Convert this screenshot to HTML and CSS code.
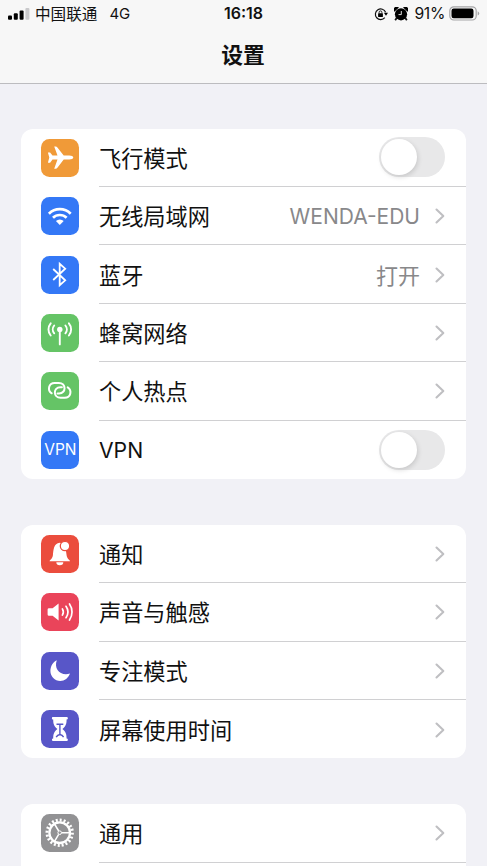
FILE: index.html
```html
<!DOCTYPE html>
<html lang="zh-CN">
<head>
<meta charset="utf-8">
<title>设置</title>
<link rel="stylesheet" href="styles.css">
</head>
<body>
<header class="header">
  <div class="status">
    <div class="status-left">
      <svg class="signal" width="22" height="12" viewBox="0 0 22 12"><rect x="0" y="7.5" width="4" height="4.2" rx="1"/><rect x="5.8" y="5.2" width="4" height="6.5" rx="1"/><rect x="11.6" y="2.6" width="4" height="9.1" rx="1"/><rect x="17.4" y="0" width="4" height="11.7" rx="1" fill="#c9c9cb"/></svg>
      <span class="carrier">中国联通</span><span class="network">4G</span>
    </div>
    <div class="clock">16:18</div>
    <div class="status-right">
      <svg width="14" height="14" viewBox="0 0 14 14"><path d="M10.8 10.6A5.3 5.3 0 1 1 11.6 5.3" fill="none" stroke="#111" stroke-width="1.2"/><path d="M9.9 5.8h4.1l-2 3z"/><rect x="4.100" y="6.2" width="4.800" height="3.800" rx=".6"/><path d="M5.100 6.500V5.300a1.400 1.400 0 0 1 2.800 0v1.200" fill="none" stroke="#111" stroke-width=".9"/></svg>
      <svg class="alarm" width="14" height="14" viewBox="0 0 14 14"><circle cx="7" cy="7.300" r="6.100"/><path d="M.4 4.800A2.500 2.500 0 0 1 4.900.6zM13.600 4.800A2.500 2.500 0 0 0 9.100.6z"/><path d="M2.800 10.800L1.200 13.200M11.200 10.800l1.600 2.400" stroke="#111" stroke-width="1.800"/><path d="M7.300 4v3.600H4.500" fill="none" stroke="#f7f7f7" stroke-width=".9"/></svg>
      <span class="percent">91%</span>
      <svg class="battery" width="31" height="15" viewBox="0 0 31 15"><rect x=".8" y=".8" width="26.400" height="13.200" rx="4" fill="none" stroke="#a5a5a7" stroke-width="1.200"/><rect x="2.500" y="2.500" width="22" height="9.800" rx="2.200"/><path d="M28.700 5.200q1.500.8 1.500 2.200t-1.500 2.200z" fill="#a5a5a7"/></svg>
    </div>
  </div>
  <h1 class="title">设置</h1>
</header>
<main class="groups">
  <section class="group">
    <div class="row">
      <svg class="icon orange" viewBox="0 0 38 38"><path d="M32.300 18.600c0 1.200-1.800 2-4 2h-5.600l-6.300 8.200c-.5.6-1 .9-1.800.9h-1.400l3.300-9.100h-5l-2.400 3.200H6.900l1.400-5.200-1.400-5.200h2.200l2.400 3.200h5l-3.300-9.100h1.400c.8 0 1.300.3 1.800.9l6.300 8.200h5.600c2.200 0 4 .8 4 2z" fill="#fff"/></svg>
      <div class="content"><span class="label">飞行模式</span><span class="switch"></span></div>
    </div>
    <div class="row">
      <svg class="icon blue" viewBox="0 0 38 38"><g fill="none" stroke="#fff" stroke-width="2.700"><path d="M7.900 16.700a15.500 15.500 0 0 1 21.800 0"/><path d="M12 20.800a9.600 9.600 0 0 1 13.600 0"/></g><path d="M14.900 24a5.500 5.500 0 0 1 7.800 0l-3.900 3.900z" fill="#fff"/></svg>
      <div class="content"><span class="label">无线局域网</span><span class="value latin-value">WENDA-EDU</span><svg class="chevron" viewBox="0 0 10 16"><path d="M1.500 1.500L8.300 8l-6.800 6.500"/></svg></div>
    </div>
    <div class="row">
      <svg class="icon blue" viewBox="0 0 38 38"><path d="M12.200 13l12 11.300-5.500 4.900V7.800l5.500 4.900L12.200 24" fill="none" stroke="#fff" stroke-width="1.800"/></svg>
      <div class="content"><span class="label">蓝牙</span><span class="value">打开</span><svg class="chevron" viewBox="0 0 10 16"><path d="M1.500 1.500L8.300 8l-6.800 6.500"/></svg></div>
    </div>
    <div class="row">
      <svg class="icon green" viewBox="0 0 38 38"><circle cx="18.800" cy="15.400" r="2.700" fill="#fff"/><g fill="none" stroke="#fff" stroke-width="1.900" stroke-linecap="round"><path d="M18.800 16v14.400"/><path d="M13.200 11.500a6 6 0 0 0 0 7.800M24.400 11.500a6 6 0 0 1 0 7.800M9.700 9.300a9.500 9.500 0 0 0 0 12.200M27.900 9.300a9.500 9.500 0 0 1 0 12.200"/></g></svg>
      <div class="content"><span class="label">蜂窝网络</span><svg class="chevron" viewBox="0 0 10 16"><path d="M1.500 1.500L8.300 8l-6.800 6.500"/></svg></div>
    </div>
    <div class="row">
      <svg class="icon green" viewBox="0 0 38 38"><g fill="none" stroke="#fff" stroke-width="2" stroke-linecap="round"><path d="M10.700 21.300c-4.600-3-3.200-10.400 3-10.400h4.100c7.600 0 7.600 10.500.3 10.500h-1.600"/><path d="M26.700 15.400c4.600 3 3.200 10.400-3 10.400h-4.100c-7.600 0-7.600-10.500-.3-10.500h1.600"/></g></svg>
      <div class="content"><span class="label">个人热点</span><svg class="chevron" viewBox="0 0 10 16"><path d="M1.500 1.500L8.300 8l-6.800 6.500"/></svg></div>
    </div>
    <div class="row">
      <div class="icon blue vpn">VPN</div>
      <div class="content"><span class="label latin">VPN</span><span class="switch"></span></div>
    </div>
  </section>
  <section class="group">
    <div class="row">
      <svg class="icon red" viewBox="0 0 38 38"><path d="M8.600 26.200c0-1.200 2.900-2.400 3.300-6 .5-5 .7-12 6.900-12.500 5.500.5 6.200 7.500 6.800 12.500.4 3.600 3.400 4.800 3.400 6z" fill="#fff"/><path d="M15.300 27.300h7a3.500 3 0 0 1-7 0z" fill="#fff"/><circle cx="24" cy="11" r="4.700" fill="#fff" stroke="#eb4d3d" stroke-width="1.300"/></svg>
      <div class="content"><span class="label">通知</span><svg class="chevron" viewBox="0 0 10 16"><path d="M1.500 1.500L8.300 8l-6.800 6.500"/></svg></div>
    </div>
    <div class="row">
      <svg class="icon pink" viewBox="0 0 38 38"><path d="M8 15.200h3.600l6-4.700v17l-6-4.700H8q-1.400 0-1.400-1.400v-4.800q0-1.400 1.400-1.400z" fill="#fff"/><g fill="none" stroke="#fff" stroke-width="1.700" stroke-linecap="round"><path d="M21.400 15.900a6 6 0 0 1 0 6.200M25 13.300a10 10 0 0 1 0 11.400M28.500 11a14 14 0 0 1 0 16"/></g></svg>
      <div class="content"><span class="label">声音与触感</span><svg class="chevron" viewBox="0 0 10 16"><path d="M1.500 1.500L8.300 8l-6.800 6.500"/></svg></div>
    </div>
    <div class="row">
      <svg class="icon indigo" viewBox="0 0 38 38"><path d="M15.800 8.200c-3.200 8.500 3.500 16.300 13.200 13.400-1.600 4.500-5.400 7.400-9.700 7.400-5.500 0-9.900-4.400-9.900-9.900 0-4.800 2.500-9 6.400-10.900z" fill="#fff"/></svg>
      <div class="content"><span class="label">专注模式</span><svg class="chevron" viewBox="0 0 10 16"><path d="M1.500 1.500L8.300 8l-6.800 6.500"/></svg></div>
    </div>
    <div class="row">
      <svg class="icon indigo" viewBox="0 0 38 38"><path d="M12.200 7h13.400q1.300 0 1.300 1.200t-1.300 1.300c0 4.300-.8 6.700-4.200 9.500 3.400 2.800 4.200 5.200 4.200 9.500q1.300.1 1.300 1.300T25.600 31H12.200q-1.300 0-1.300-1.200t1.300-1.300c0-4.300.8-6.700 4.200-9.500-3.400-2.800-4.200-5.200-4.200-9.500-1 0-1.300-.5-1.300-1.300S11.200 7 12.200 7z" fill="#fff"/><path d="M15.500 14.300h6.800M18.900 14.300v11M15.200 27.200q1.200-2.200 3.700-2.700 2.500.5 3.700 2.700" fill="none" stroke="#5856c8" stroke-width="1.400"/></svg>
      <div class="content"><span class="label">屏幕使用时间</span><svg class="chevron" viewBox="0 0 10 16"><path d="M1.500 1.500L8.300 8l-6.800 6.500"/></svg></div>
    </div>
  </section>
  <section class="group cut">
    <div class="row">
      <svg class="icon gray" viewBox="0 0 38 38"><g fill="none" stroke="#fff"><circle cx="18.700" cy="18.700" r="12.700" stroke-width="3" pathLength="40" stroke-dasharray="1 1"/><circle cx="18.700" cy="18.700" r="10.300" stroke-width="2.300"/><circle cx="18.700" cy="18.700" r="1.800" stroke-width="1"/><path d="M20.700 18.700h8.500M17.700 17l-4.800-8M17.700 20.400l-4.800 8" stroke-width="1.500"/></g></svg>
      <div class="content"><span class="label">通用</span><svg class="chevron" viewBox="0 0 10 16"><path d="M1.500 1.500L8.300 8l-6.800 6.500"/></svg></div>
    </div>
  </section>
</main>
</body>
</html>
```
FILE: styles.css
```css
* {
  box-sizing: border-box;
}

body {
  display: flex;
  flex-direction: column;
  margin: 0;
  height: 866px;
  overflow: hidden;
  background: #f1f1f6;
  color: #111;
  font-family: Inter, "Noto Sans CJK SC", sans-serif;
}

.header {
  flex: none;
  height: 84px;
  background: #f7f7f7;
  border-bottom: 1px solid #bcbcbf;
}

.status {
  display: grid;
  grid-template-columns: 1fr auto 1fr;
  align-items: center;
  height: 27px;
  padding: 0 7px 0 8px;
  font-size: 15px;
  line-height: 27px;
}

.status-left,
.status-right {
  display: flex;
  align-items: center;
  height: 27px;
}

.status-right {
  justify-content: flex-end;
}

.signal {
  margin-right: 5px;
}

.carrier {
  padding-top: 1px;
  font-size: 15.6px;
}

.network {
  margin-left: 12px;
}

.clock {
  margin-right: 1px;
  font-size: 16px;
  font-weight: 600;
}

.alarm {
  margin: 0 6px;
}

.percent {
  font-size: 15.7px;
  letter-spacing: -0.3px;
}

.battery {
  margin-left: 4px;
}

.title {
  margin: 0;
  padding-right: 1px;
  font-size: 21.8px;
  font-weight: 700;
  line-height: 56px;
  text-align: center;
}

.groups {
  display: flex;
  flex: 1;
  flex-direction: column;
  gap: 45.8px;
  min-height: 0;
  padding: 44.7px 21px 0;
}

.group {
  flex: none;
  background: #fff;
  border-radius: 12px;
  overflow: hidden;
}

.cut {
  flex: 1;
  min-height: 0;
  border-radius: 12px 12px 0 0;
}

.row {
  display: flex;
  align-items: center;
  height: 58.4px;
  padding-left: 20.4px;
}

.icon {
  flex: none;
  width: 38px;
  height: 38px;
  margin-right: 19.6px;
  border-radius: 8.5px;
}

.orange { background: #f09a38; }
.blue { background: #3478f6; }
.green { background: #65c466; }
.red { background: #eb4d3d; }
.pink { background: #ea445a; }
.indigo { background: #5856c8; }
.gray { background: #929294; }

.vpn {
  color: #fff;
  font-size: 15.5px;
  line-height: 38px;
  text-align: center;
}

.content {
  display: flex;
  flex: 1;
  align-items: center;
  height: 100%;
  padding-right: 21px;
  border-bottom: 1px solid #d0d0d2;
}

.group:not(.cut) .row:last-child .content {
  border-bottom: 0;
}

.label {
  flex: 1;
  padding-top: 3px;
  font-size: 22.2px;
  line-height: 32px;
}

.latin {
  padding-top: 1px;
  font-size: 21.2px;
}

.value {
  padding-top: 3px;
  color: #88888a;
  font-size: 22px;
  line-height: 32px;
}

.latin-value {
  font-size: 21px;
}

.chevron {
  width: 10px;
  height: 16px;
  margin-top: 1px;
  margin-left: 15px;
  fill: none;
  stroke: #bfbfc2;
  stroke-width: 2.1;
  stroke-linecap: round;
  stroke-linejoin: round;
}

.switch {
  width: 66px;
  height: 40px;
  padding: 2px;
  border-radius: 20px;
  background: #e8e8e9;
}

.switch::before {
  content: "";
  display: block;
  width: 36px;
  height: 36px;
  border-radius: 50%;
  background: #fff;
  box-shadow: 1px 2px 5px rgba(0, 0, 0, 0.14);
}
```
